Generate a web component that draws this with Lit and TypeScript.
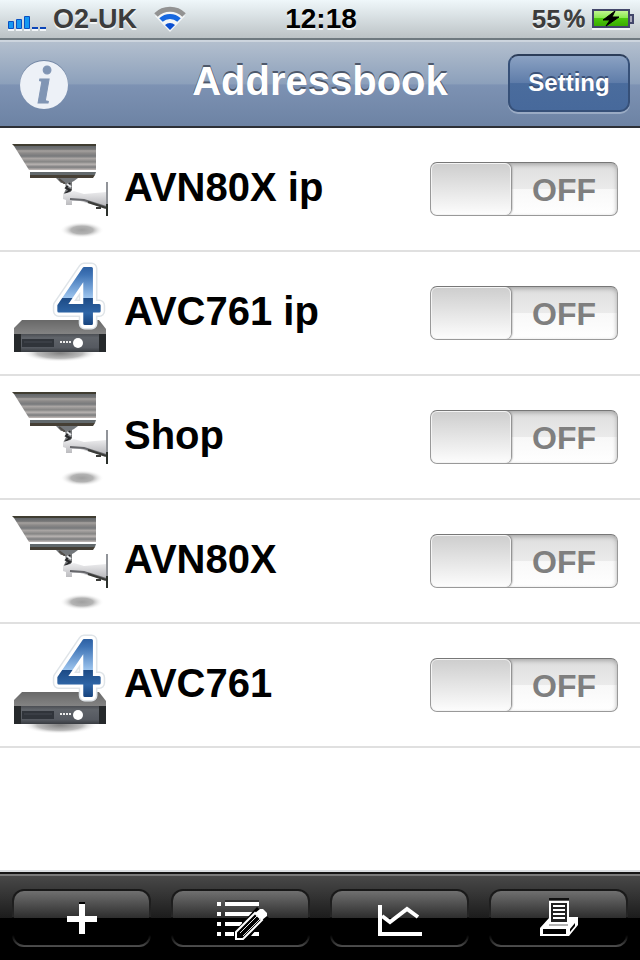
import { LitElement, html, css, svg } from "lit";
import { customElement, property, state } from "lit/decorators.js";

type Kind = "camera" | "recorder";
interface Device {
  name: string;
  kind: Kind;
  on: boolean;
}

const cameraArt = svg`
  <defs>
    <linearGradient id="body" x1="0" y1="0" x2="0" y2="1">
      <stop offset="0" stop-color="#62666a"/><stop offset=".14" stop-color="#777"/>
      <stop offset=".2" stop-color="#a5a19f"/><stop offset=".3" stop-color="#8b8988"/>
      <stop offset=".42" stop-color="#77797b"/><stop offset=".52" stop-color="#a9a5a3"/>
      <stop offset=".66" stop-color="#858584"/><stop offset=".76" stop-color="#b8b3b1"/>
      <stop offset=".88" stop-color="#7c7d7e"/><stop offset="1" stop-color="#c4bcb9"/>
    </linearGradient>
    <linearGradient id="arm" x1="0" y1="0" x2="0" y2="1">
      <stop offset="0" stop-color="#eeeef0"/><stop offset="1" stop-color="#b4b4b8"/>
    </linearGradient>
    <radialGradient id="shade">
      <stop offset="0" stop-color="#a0a0a0"/><stop offset=".5" stop-color="#b4b4b4"/>
      <stop offset="1" stop-color="#fff" stop-opacity="0"/>
    </radialGradient>
  </defs>
  <ellipse cx="70" cy="92" rx="22" ry="8" fill="url(#shade)"/>
  <path d="M2 8H84V32H17Z" fill="url(#body)"/>
  <path d="M0 6H84V8H2Z" fill="#403d31"/>
  <path d="M18 34H84L83 37H18Z" fill="#62696c"/>
  <path d="M18 37H83L81 40H18Z" fill="#453f35"/>
  <path d="M44 40H66L62 43L58 45H49Z" fill="#73777b"/>
  <path d="M47 41L52 45H58" fill="none" stroke="#514d48" stroke-width="2"/>
  <path d="M53 44H60V52L57 57H51L54 51Z" fill="#77797b"/>
  <path d="M58 45L54 50L58 52L53 56" fill="none" stroke="#28292b" stroke-width="2"/>
  <path d="M55 46L59 49" stroke="#e6e8ea" stroke-width="2"/>
  <path d="M51 56L62 53L72 56L94 54V69L86 68L68 63H60V67H54V62L51 61Z" fill="url(#arm)"/>
  <path d="M58 61L72 62L94 69" fill="none" stroke="#66676b" stroke-width="2"/>
  <path d="M76 64L94 70M84 70H89" fill="none" stroke="#3a3b38" stroke-width="2"/>
  <path d="M95 44V78" stroke="#919499" stroke-width="2"/>
  <path d="M94 66H96V78H94Z" fill="#2b302b"/>`;

const recorderArt = svg`
  <defs>
    <linearGradient id="top" x1="0" y1="0" x2="0" y2="1">
      <stop offset="0" stop-color="#686868"/><stop offset=".5" stop-color="#777"/>
      <stop offset="1" stop-color="#858585"/>
    </linearGradient>
    <linearGradient id="front" x1="0" y1="0" x2="0" y2="1">
      <stop offset="0" stop-color="#4b4e53"/><stop offset=".2" stop-color="#60646a"/>
      <stop offset=".75" stop-color="#555960"/><stop offset="1" stop-color="#383b40"/>
    </linearGradient>
    <linearGradient id="digit" gradientUnits="userSpaceOnUse" x1="0" y1="4" x2="0" y2="64">
      <stop offset="0" stop-color="#2a5da0"/><stop offset=".15" stop-color="#3f74b6"/>
      <stop offset=".53" stop-color="#9cc4ee"/><stop offset=".54" stop-color="#1d4b86"/>
      <stop offset=".78" stop-color="#2e65a6"/><stop offset="1" stop-color="#14407a"/>
    </linearGradient>
    <radialGradient id="shade">
      <stop offset="0" stop-color="#808080"/><stop offset=".6" stop-color="#bbb"/>
      <stop offset="1" stop-color="#fff" stop-opacity="0"/>
    </radialGradient>
  </defs>
  <ellipse cx="48" cy="91" rx="38" ry="9" fill="url(#shade)"/>
  <path d="M10 58H87L94 67V73H2V66Z" fill="url(#top)"/>
  <path d="M9 72H87V90H9Z" fill="url(#front)"/>
  <path d="M2 72H9V90H2ZM87 72H94V90H87Z" fill="#26292b"/>
  <path d="M10 77H42V85H10Z" fill="#30343a"/>
  <path d="M12 80H40" stroke="#444951"/>
  <path d="M48 79H50V81H48ZM51 79H53V81H51ZM54 79H56V81H54ZM57 79H59V81H57Z" fill="#ececec"/>
  <circle cx="66" cy="81" r="5" fill="#fff"/>
  <g class="digit">
    <text x="45" y="61" stroke="#dfe4e8" stroke-width="12">4</text>
    <text x="45" y="61" stroke="#fff" stroke-width="9">4</text>
    <text x="45" y="61" fill="url(#digit)" stroke="url(#digit)" stroke-width="3">4</text>
  </g>`;

@customElement("device-row")
class DeviceRow extends LitElement {
  @property({ attribute: false }) device!: Device;
  @state() private on = false;

  static styles = css`
    :host {
      display: flex;
      align-items: center;
      box-sizing: border-box;
      height: 124px;
      padding: 0 22px 0 12px;
      border-bottom: 2px solid #e0e0e0;
      background: #fff;
    }
    .art {
      flex: none;
      width: 96px;
      height: 104px;
      margin-top: 2px;
      overflow: visible;
    }
    .digit {
      font: 80px "Liberation Sans", Arial, sans-serif;
      stroke-linejoin: round;
    }
    .name {
      flex: 1;
      margin: 0 16px;
      padding-bottom: 4px;
      font-size: 40px;
      line-height: 48px;
      font-weight: bold;
      color: #000;
    }
    .switch {
      display: flex;
      align-items: center;
      box-sizing: border-box;
      width: 188px;
      height: 54px;
      border: 1px solid #999;
      border-top-color: #777;
      border-radius: 7px;
      background: linear-gradient(#dedede, #ebebeb 50%, #f8f8f8 51%, #fff);
      box-shadow: inset 0 2px 4px #aaa;
      cursor: pointer;
      overflow: hidden;
    }
    .thumb {
      appearance: none;
      flex: none;
      box-sizing: border-box;
      width: 80px;
      height: 52px;
      margin: 0;
      border: 1px solid #f4f4f4;
      border-radius: 6px;
      background: linear-gradient(#cecece, #fcfcfc);
      box-shadow: 1px 0 2px #777;
    }
    .label {
      flex: 1;
      padding-top: 2px;
      text-align: center;
      font-size: 32px;
      line-height: 36px;
      font-weight: bold;
      color: #7f7f7f;
    }
    .switch.on {
      flex-direction: row-reverse;
    }
  `;

  render() {
    return html`
      <svg class="art" viewBox="0 0 96 104" aria-hidden="true">
        ${this.device.kind === "camera" ? cameraArt : recorderArt}
      </svg>
      <span class="name" id="name">${this.device.name}</span>
      <label class="switch ${this.on ? "on" : ""}">
        <input
          class="thumb"
          type="checkbox"
          role="switch"
          aria-labelledby="name"
          .checked=${this.on}
          @change=${() => (this.on = !this.on)}
        />
        <span class="label">${this.on ? "ON" : "OFF"}</span>
      </label>
    `;
  }
}

@customElement("app-root")
class AppRoot extends LitElement {
  private devices: Device[] = [
    { name: "AVN80X ip", kind: "camera", on: false },
    { name: "AVC761 ip", kind: "recorder", on: false },
    { name: "Shop", kind: "camera", on: false },
    { name: "AVN80X", kind: "camera", on: false },
    { name: "AVC761", kind: "recorder", on: false },
  ];

  static styles = css`
    :host {
      display: flex;
      flex-direction: column;
      min-height: 100vh;
      background: #fff;
      font-family: "Liberation Sans", Arial, Helvetica, sans-serif;
    }
    .status {
      display: grid;
      grid-template-columns: 1fr auto 1fr;
      align-items: center;
      box-sizing: border-box;
      height: 40px;
      padding: 0 6px 0 8px;
      border-bottom: 2px solid #6f7a80;
      background: linear-gradient(#eff7fa, #bcc3c6);
      font-size: 27px;
      line-height: 38px;
      font-weight: bold;
      color: #3c3c3c;
      text-shadow: 0 2px 0 #f2f5f6;
    }
    .side {
      display: flex;
      align-items: center;
    }
    .carrier {
      margin: 0 16px 0 6px;
    }
    .clock {
      font-size: 28px;
      color: #000;
    }
    .right {
      justify-content: flex-end;
      font-size: 26px;
    }
    .percent {
      margin: 0 7px 0 3px;
      font-size: 24px;
      font-weight: normal;
      -webkit-text-stroke: 1px #3c3c3c;
    }
    .icon {
      display: block;
      flex: none;
    }
    .bar {
      display: grid;
      grid-template-columns: 122px 1fr 122px;
      align-items: center;
      box-sizing: border-box;
      height: 88px;
      padding: 0 10px 2px;
      border-top: 2px solid #cdd5de;
      border-bottom: 2px solid #2d3036;
      background: linear-gradient(#b3bfce, #8ca0bb 50%, #7d92b3 51%, #6d83a4);
    }
    .title {
      margin: 0;
      padding-bottom: 4px;
      text-align: center;
      font-size: 40px;
      line-height: 48px;
      font-weight: bold;
      color: #fff;
      text-shadow: 0 -2px 0 #4d586a;
    }
    .info {
      justify-self: start;
      width: 50px;
      height: 50px;
      margin: 4px 0 0 9px;
      padding: 0;
      border: 0;
      background: none;
    }
    .info .icon {
      overflow: visible;
    }
    .letter {
      font: italic bold 52px "Liberation Serif", "Times New Roman", serif;
      fill: #8095b4;
      stroke: #8095b4;
      stroke-width: 1px;
    }
    .setting {
      width: 122px;
      height: 58px;
      padding: 0;
      border: 2px solid #365078;
      border-top-color: #2c3d59;
      border-radius: 10px;
      background: linear-gradient(#8ba2c3, #5e7ca9 50%, #4a6c9d 51%, #47699b);
      box-shadow: 0 2px 0 #9aabc4;
      font: bold 24px/30px "Liberation Sans", Arial, sans-serif;
      color: #fff;
      text-shadow: 0 -2px 0 #3b5278;
    }
    .list {
      flex: 1;
      margin: 0;
      padding: 0;
      list-style: none;
    }
    .tools {
      display: grid;
      grid-template-columns: repeat(4, 1fr);
      gap: 20px;
      box-sizing: border-box;
      height: 90px;
      padding: 17px 12px 13px;
      border-top: 2px solid #d9dcdf;
      background: linear-gradient(#151515 2px, #7a7a7a 2px, #7a7a7a 4px, #484848 4px, #1c1c1c 46px, #000 46px);
    }
    .tool {
      display: flex;
      align-items: center;
      justify-content: center;
      height: 58px;
      padding: 0;
      border: 2px solid transparent;
      border-radius: 12px;
      background:
        linear-gradient(#707070, #2d2d2d 27px, #000 27px) padding-box,
        linear-gradient(#171717, #262626 28px, #000 29px, #000 46px, #505050) border-box;
    }
  `;

  private signal() {
    return html`<svg class="icon" width="39" height="24" viewBox="0 0 39 24" role="img" aria-label="Signal">
      <path d="M0 14H6V24H0ZM8 12H14V24H8ZM16 9H22V24H16ZM24 20H30V24H24ZM32 20H38V24H32Z" fill="#f2f6f8" />
      <g fill="#1598f2" stroke="#0a4fc0">
        <path d="M.5 14.500H5.500V21.500H.5ZM8.500 12.500H13.500V21.500H8.500ZM16.500 9.500H21.500V21.500H16.500Z" />
      </g>
      <path d="M24 20H30V22H24ZM32 20H38V22H32Z" fill="#0c46b8" />
    </svg>`;
  }

  private wifi() {
    return html`<svg class="icon" width="34" height="26" viewBox="0 0 34 26" role="img" aria-label="Wi-Fi">
      <path d="M2 10A21 21 0 0 1 32 10L17 26Z" fill="#f3f6f7" />
      <g fill="none">
        <path d="M3 9A20 20 0 0 1 31 9" stroke="#929292" stroke-width="5" />
        <path d="M8 14A13 13 0 0 1 26 14" stroke="#1668e0" stroke-width="5" />
      </g>
      <path d="M12 19A7 7 0 0 1 22 19L17 24Z" fill="#0b4fd0" />
    </svg>`;
  }

  private battery() {
    return html`<svg class="icon" width="42" height="22" viewBox="0 0 42 22" role="img" aria-label="Battery charging">
      <defs>
        <linearGradient id="cell" x1="0" y1="0" x2="0" y2="1">
          <stop offset="0" stop-color="#c9f59b" /><stop offset=".45" stop-color="#8bea50" />
          <stop offset=".5" stop-color="#4cc80c" /><stop offset="1" stop-color="#37a800" />
        </linearGradient>
      </defs>
      <path d="M0 20H38V22H0Z" fill="#f3f6f7" />
      <path d="M1 2H37V19H1Z" fill="url(#cell)" stroke="#42466a" stroke-width="2" />
      <path d="M38 7H41V15H38" fill="#aab" stroke="#42466a" stroke-width="2" />
      <path d="M23 3L11 12H18L14 18L27 9H20Z" fill="#000" stroke="#000" />
    </svg>`;
  }

  private tools() {
    return [
      {
        label: "Add",
        art: svg`<path d="M21 6H27V8H21Z" fill="#000"/><path d="M9 23H39M24 8V38" stroke="#fff" stroke-width="6"/>`,
      },
      {
        label: "Edit list",
        art: svg`
          <path d="M0 6H4V10H0ZM0 16H4V20H0ZM0 26H4V30H0ZM0 36H4V40H0ZM8 6H42V10H8ZM8 16H35V20H8ZM8 26H25V30H8ZM8 36H17V40H8ZM34 40L37 36H42V40Z" fill="#fff"/>
          <path d="M8 5H42" stroke="#111"/>
          <path d="M16 45L18 35L40 11L52 22L28 45Z" fill="#000"/>
          <path d="M19 43V36L38 17L45 24L26 43Z" fill="#000" stroke="#fff" stroke-width="2"/>
          <path d="M23 37L41 19M26 40L44 22" stroke="#ddd"/>
          <path d="M38 17L43 13H46L50 17V20L45 24Z" fill="#fff"/>`,
      },
      {
        label: "Chart",
        art: svg`<path d="M4 9V38H46" fill="none" stroke="#fff" stroke-width="4"/>
          <path d="M6 20L14 26L31 13L42 21" fill="none" stroke="#fff" stroke-width="4"/>`,
      },
      {
        label: "Print",
        art: svg`<path d="M14 3H34" stroke="#111" stroke-width="2"/>
          <path d="M15 6H33V27H15Z" fill="#222" stroke="#fff" stroke-width="2"/>
          <path d="M18 10H30M18 14H30M18 18H30M18 22H30" stroke="#fff" stroke-width="2"/>
          <path d="M14 22L5 32V40H34L43 29V21H34V27H14Z" fill="#fff"/>
          <path d="M8 33H31V38H8ZM35 33L40 27V30L35 36Z" fill="#000"/>
          <path d="M14 29H33" stroke="#666"/>`,
      },
    ];
  }

  render() {
    return html`
      <div class="status">
        <div class="side">${this.signal()}<span class="carrier">O2-UK</span>${this.wifi()}</div>
        <time class="clock">12:18</time>
        <div class="side right"><span>55</span><span class="percent">%</span>${this.battery()}</div>
      </div>
      <header class="bar">
        <button class="info" aria-label="Information">
          <svg class="icon" width="50" height="50" viewBox="0 0 50 50">
            <circle cx="25" cy="24" r="24" fill="#7286a4" />
            <circle cx="25" cy="25" r="24" fill="#edf1f7" />
            <text class="letter" x="25" y="43" text-anchor="middle">i</text>
          </svg>
        </button>
        <h1 class="title">Addressbook</h1>
        <button class="setting">Setting</button>
      </header>
      <ul class="list">
        ${this.devices.map((d) => html`<li><device-row .device=${d}></device-row></li>`)}
      </ul>
      <nav class="tools" aria-label="Tools">
        ${this.tools().map(
          (t) => html`<button class="tool" aria-label=${t.label}>
            <svg class="icon" width="48" height="44" viewBox="0 0 48 44" overflow="visible">${t.art}</svg>
          </button>`
        )}
      </nav>
    `;
  }
}
